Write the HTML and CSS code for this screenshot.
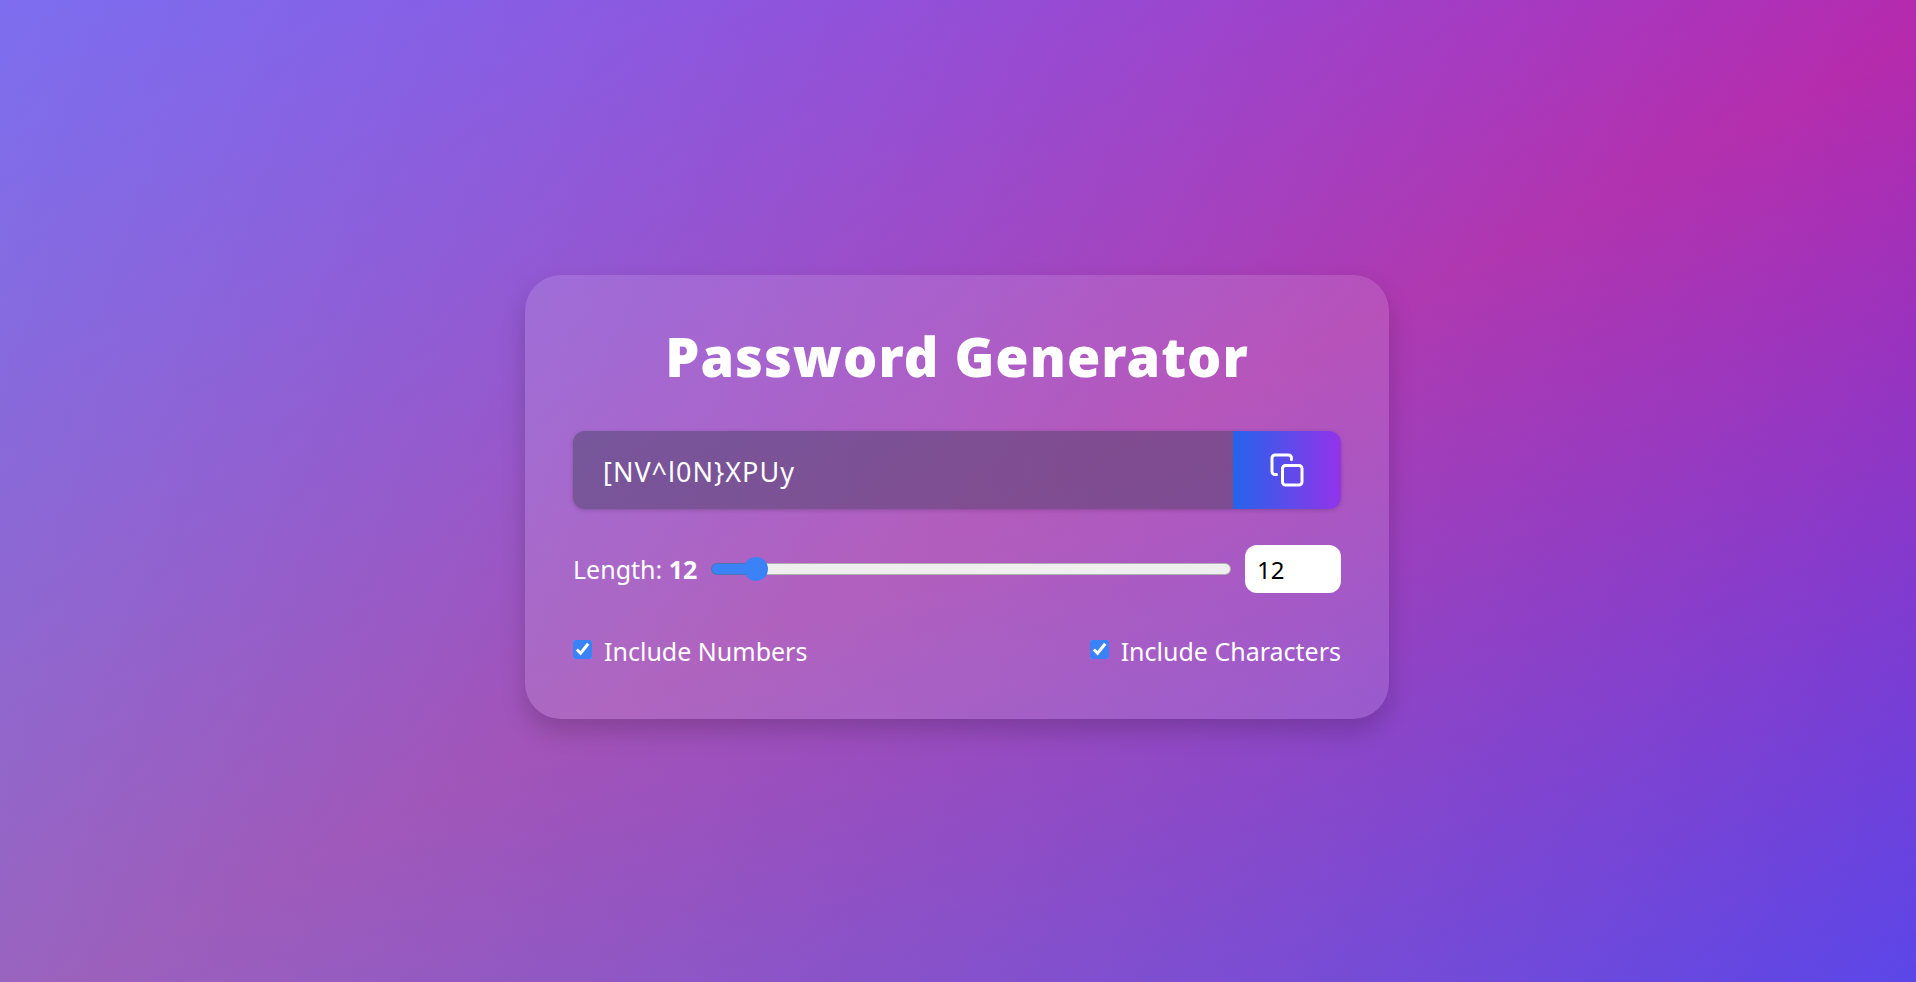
FILE: index.html
```html
<!DOCTYPE html>
<html lang="en">
<head>
<meta charset="utf-8">
<meta name="viewport" content="width=device-width, initial-scale=1">
<title>Password Generator</title>
<link rel="stylesheet" href="styles.css">
</head>
<body class="page">
<main class="card">
  <h1 class="title">Password Generator</h1>
  <div class="field">
    <input class="password" type="text" value="[NV^l0N}XPUy" aria-label="Generated password" readonly>
    <button class="copy" type="button" aria-label="Copy password">
      <svg class="copy-icon" viewBox="0 0 24 24" fill="none" stroke="currentColor" stroke-width="2" stroke-linecap="round" stroke-linejoin="round" aria-hidden="true">
        <rect x="9" y="9" width="13" height="13" rx="2"/>
        <path d="M5 15H4a2 2 0 0 1-2-2V4a2 2 0 0 1 2-2h9a2 2 0 0 1 2 2v1"/>
      </svg>
    </button>
  </div>
  <div class="length">
    <label class="text" for="range">Length: <strong>12</strong></label>
    <input class="range" id="range" type="range" min="6" max="100" value="12">
    <input class="number" type="number" min="6" max="100" value="12" aria-label="Password length">
  </div>
  <div class="options">
    <label class="option text"><input class="check" type="checkbox" checked>Include Numbers</label>
    <label class="option text"><input class="check" type="checkbox" checked>Include Characters</label>
  </div>
</main>
</body>
</html>
```
FILE: styles.css
```css
*, *::before, *::after {
  box-sizing: border-box;
}

.page {
  min-height: 100vh;
  margin: 0;
  padding: 36px 26px 24px 24px;
  display: flex;
  align-items: center;
  justify-content: center;
  font-family: "Noto Sans", "Open Sans", sans-serif;
  color: #fff;
  background:
    linear-gradient(to right, rgba(112, 185, 215, 0.4), rgba(112, 185, 215, 0)),
    linear-gradient(to bottom right, #853cff, #b62aac 52%, #5b46e8);
}

.card {
  width: 100%;
  max-width: 864px;
  padding: 48px;
  display: flex;
  flex-direction: column;
  border-radius: 36px;
  background: rgba(255, 255, 255, 0.12);
  box-shadow: 0 12px 24px rgba(0, 0, 0, 0.18);
}

.title {
  margin: 0 0 42px;
  font-size: 54px;
  line-height: 66px;
  font-weight: 900;
  letter-spacing: 1px;
  text-align: center;
}

.field {
  display: flex;
  height: 78px;
  overflow: hidden;
  border-radius: 12px;
  box-shadow: 0 1px 4px rgba(0, 0, 0, 0.2);
}

.password {
  flex: 1;
  min-width: 0;
  padding: 2px 30px 0;
  border: 0;
  outline: 0;
  font: 27px "Noto Sans", sans-serif;
  letter-spacing: 1px;
  color: #fff;
  background: rgba(58, 60, 84, 0.42);
}

.copy {
  width: 108px;
  padding: 0;
  display: flex;
  align-items: center;
  justify-content: center;
  border: 0;
  color: #fff;
  background: linear-gradient(to right, #2563eb, #9333ea);
}

.copy-icon {
  width: 36px;
  height: 36px;
}

.text {
  font-size: 25px;
  line-height: 40px;
}

.length {
  margin-top: 36px;
  display: flex;
  align-items: center;
  gap: 14px;
}

.range {
  flex: 1;
  min-width: 0;
  height: 24px;
  margin: 0;
  appearance: none;
  background: transparent;
}

.range::-webkit-slider-runnable-track {
  height: 12px;
  border: 1px solid rgba(100, 100, 100, 0.45);
  border-radius: 6px;
  background: linear-gradient(to right, #3b82f6 8%, #efefef 8%) border-box;
}

.range::-webkit-slider-thumb {
  width: 24px;
  height: 24px;
  margin-top: -7px;
  appearance: none;
  border-radius: 50%;
  background: #3b82f6;
}

.number {
  width: 96px;
  height: 48px;
  padding: 0 12px;
  border: 0;
  border-radius: 12px;
  font: 24px "Noto Sans", sans-serif;
  color: #000;
  background: #fff;
}

.options {
  margin-top: 38px;
  display: flex;
  justify-content: space-between;
}

.option {
  display: flex;
  align-items: center;
  gap: 12px;
}

.check {
  width: 19px;
  height: 19px;
  margin: 0 0 4px;
  accent-color: #3b82f6;
}
```
